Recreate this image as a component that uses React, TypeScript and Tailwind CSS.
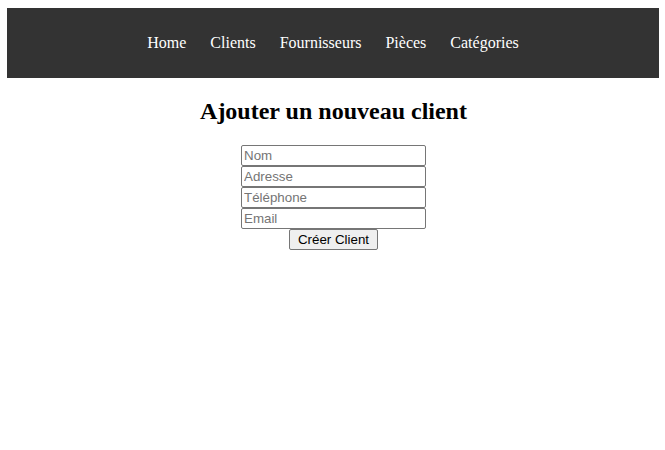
import React from 'react';

const links = ['Home', 'Clients', 'Fournisseurs', 'Pièces', 'Catégories'];
const fields = ['Nom', 'Adresse', 'Téléphone', 'Email'];

const App: React.FC = () => {
  return (
    <div className="min-h-[450px] bg-white pt-[8px] font-['Liberation_Serif',serif] text-black">
      <nav className="ml-[7px] mr-[6px] flex h-[70px] items-center justify-center bg-[#333333]">
        <ul className="flex items-center gap-[24px]">
          {links.map((link) => (
            <li key={link}>
              <a href="#" className="text-[16px] leading-[18px] text-white">
                {link}
              </a>
            </li>
          ))}
        </ul>
      </nav>

      <main className="ml-[8px] mr-[6px]">
        <h2 className="mt-[19px] mb-[20px] text-center text-[24px] leading-[28px] font-bold">
          Ajouter un nouveau client
        </h2>

        <form className="flex flex-col items-center font-['Liberation_Sans',Arial,sans-serif]">
          {fields.map((field) => (
            <input
              key={field}
              type="text"
              placeholder={field}
              className="h-[21px] w-[185px] rounded-[2px] border border-[#767676] bg-white px-[2px] text-[13.33px] text-black placeholder:text-[#757575] outline-none"
            />
          ))}
          <button
            type="submit"
            className="h-[21px] w-[89px] rounded-[2px] border border-[#767676] bg-[#efefef] text-[13.33px] leading-[15px] text-black"
          >
            Créer Client
          </button>
        </form>
      </main>
    </div>
  );
};

export default App;
